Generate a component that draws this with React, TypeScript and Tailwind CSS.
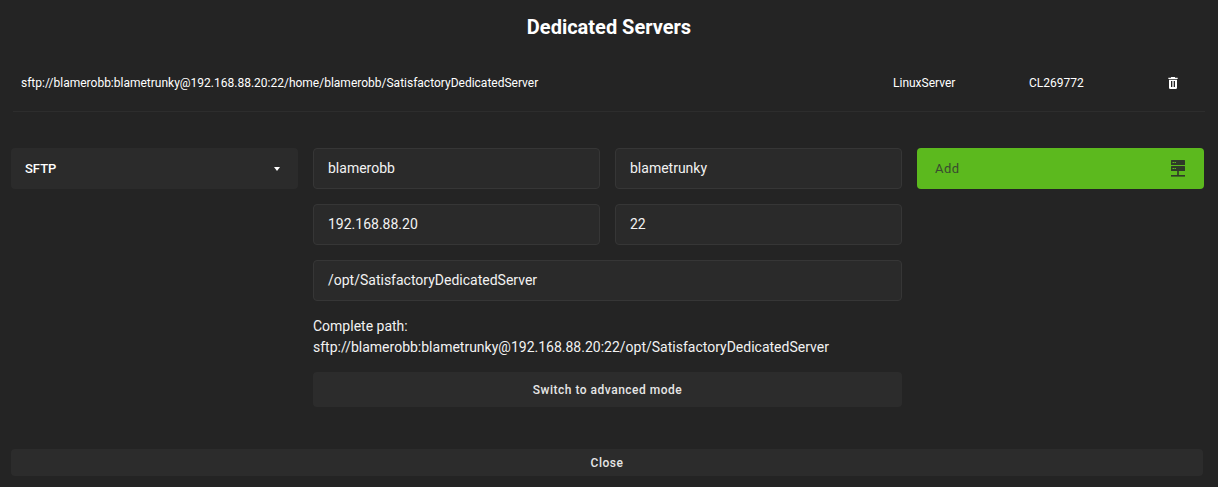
import React from "react";

// ---------------------------------------------------------------------------
// Icons
// ---------------------------------------------------------------------------
function TrashIcon() {
  return (
    <svg viewBox="0 0 24 24" className="w-4 h-4" fill="#ffffff">
      <path d="M9 3h6v1h4v2H5V4h4z" />
      <path
        fillRule="evenodd"
        d="M6 7h12v12a2 2 0 0 1-2 2H8a2 2 0 0 1-2-2zM9 9v9h2V9zm4 0v9h2V9z"
      />
    </svg>
  );
}

function ServerIcon() {
  return (
    <svg viewBox="0 0 14 18" className="w-[14px] h-[18px]" fill="#2f3a29">
      <rect x="0" y="0" width="14" height="5" rx="0.5" />
      <rect x="0" y="6" width="14" height="5" rx="0.5" />
      <rect x="1.5" y="2" width="1.5" height="1" fill="#5cb91e" />
      <rect x="3.5" y="2" width="1.5" height="1" fill="#5cb91e" />
      <rect x="1.5" y="8" width="1.5" height="1" fill="#5cb91e" />
      <rect x="3.5" y="8" width="1.5" height="1" fill="#5cb91e" />
      <rect x="6.2" y="11" width="1.6" height="4" />
      <rect x="0" y="15" width="14" height="1.6" />
    </svg>
  );
}

function Field({ value }: { value: string }) {
  return (
    <div className="h-[41px] rounded-[4px] border border-[#363636] bg-[#2a2a2a] pl-[14px] flex items-center text-[14px] text-[#f2f2f2]">
      {value}
    </div>
  );
}

// ---------------------------------------------------------------------------
// Page
// ---------------------------------------------------------------------------
export default function App() {
  const user = "blamerobb";
  const pass = "blametrunky";
  const host = "192.168.88.20";
  const port = "22";
  const path = "/opt/SatisfactoryDedicatedServer";

  return (
    <div
      className="w-full h-[487px] bg-[#242424] px-[11px] text-white overflow-hidden"
      style={{ fontFamily: "Roboto, 'Liberation Sans', sans-serif" }}
    >
      {/* Title */}
      <div className="h-[54px] flex items-center justify-center">
        <h1 className="text-[20px] font-bold">Dedicated Servers</h1>
      </div>

      {/* Existing server row */}
      <div className="h-[58px] mx-[2px] flex items-center border-b border-[#2d2d2d] text-[12px]">
        <div className="w-[880px] pl-[8px]">
          sftp://blamerobb:blametrunky@192.168.88.20:22/home/blamerobb/SatisfactoryDedicatedServer
        </div>
        <div className="w-[136px]">LinuxServer</div>
        <div className="w-[136px]">CL269772</div>
        <button type="button" className="flex items-center">
          <TrashIcon />
        </button>
      </div>

      {/* Add form */}
      <div className="mt-[36px] grid grid-cols-4 gap-[15px] w-[1193px]">
        <div className="h-[41px] rounded-[4px] bg-[#2b2b2b] pl-[14px] pr-[18px] flex items-center justify-between text-[13px] font-medium">
          <span>SFTP</span>
          <span className="w-0 h-0 border-l-[3.5px] border-r-[3.5px] border-t-[4px] border-l-transparent border-r-transparent border-t-white" />
        </div>
        <Field value={user} />
        <Field value={pass} />
        <button
          type="button"
          className="h-[41px] rounded-[4px] bg-[#5cb91e] pl-[18px] pr-[19px] flex items-center justify-between text-[13px] tracking-[0.5px] text-[#3a4a30]"
        >
          <span>Add</span>
          <ServerIcon />
        </button>

        <div />
        <Field value={host} />
        <Field value={port} />
        <div />

        <div />
        <div className="col-span-2">
          <Field value={path} />
          <div className="mt-[15px] text-[14px] leading-[21px] text-[#f2f2f2]">
            <div>Complete path:</div>
            <div>
              sftp://{user}:{pass}@{host}:{port}
              {path}
            </div>
          </div>
          <button
            type="button"
            className="mt-[14px] w-full h-[35px] rounded-[4px] bg-[#2c2c2c] text-[12px] font-medium tracking-[0.5px] text-[#e6e6e6]"
          >
            Switch to advanced mode
          </button>
        </div>
        <div />
      </div>

      {/* Close */}
      <button
        type="button"
        className="mt-[42px] w-[1192px] h-[27px] rounded-[4px] bg-[#2c2c2c] text-[12px] font-medium tracking-[0.5px] text-[#e6e6e6]"
      >
        Close
      </button>
    </div>
  );
}
